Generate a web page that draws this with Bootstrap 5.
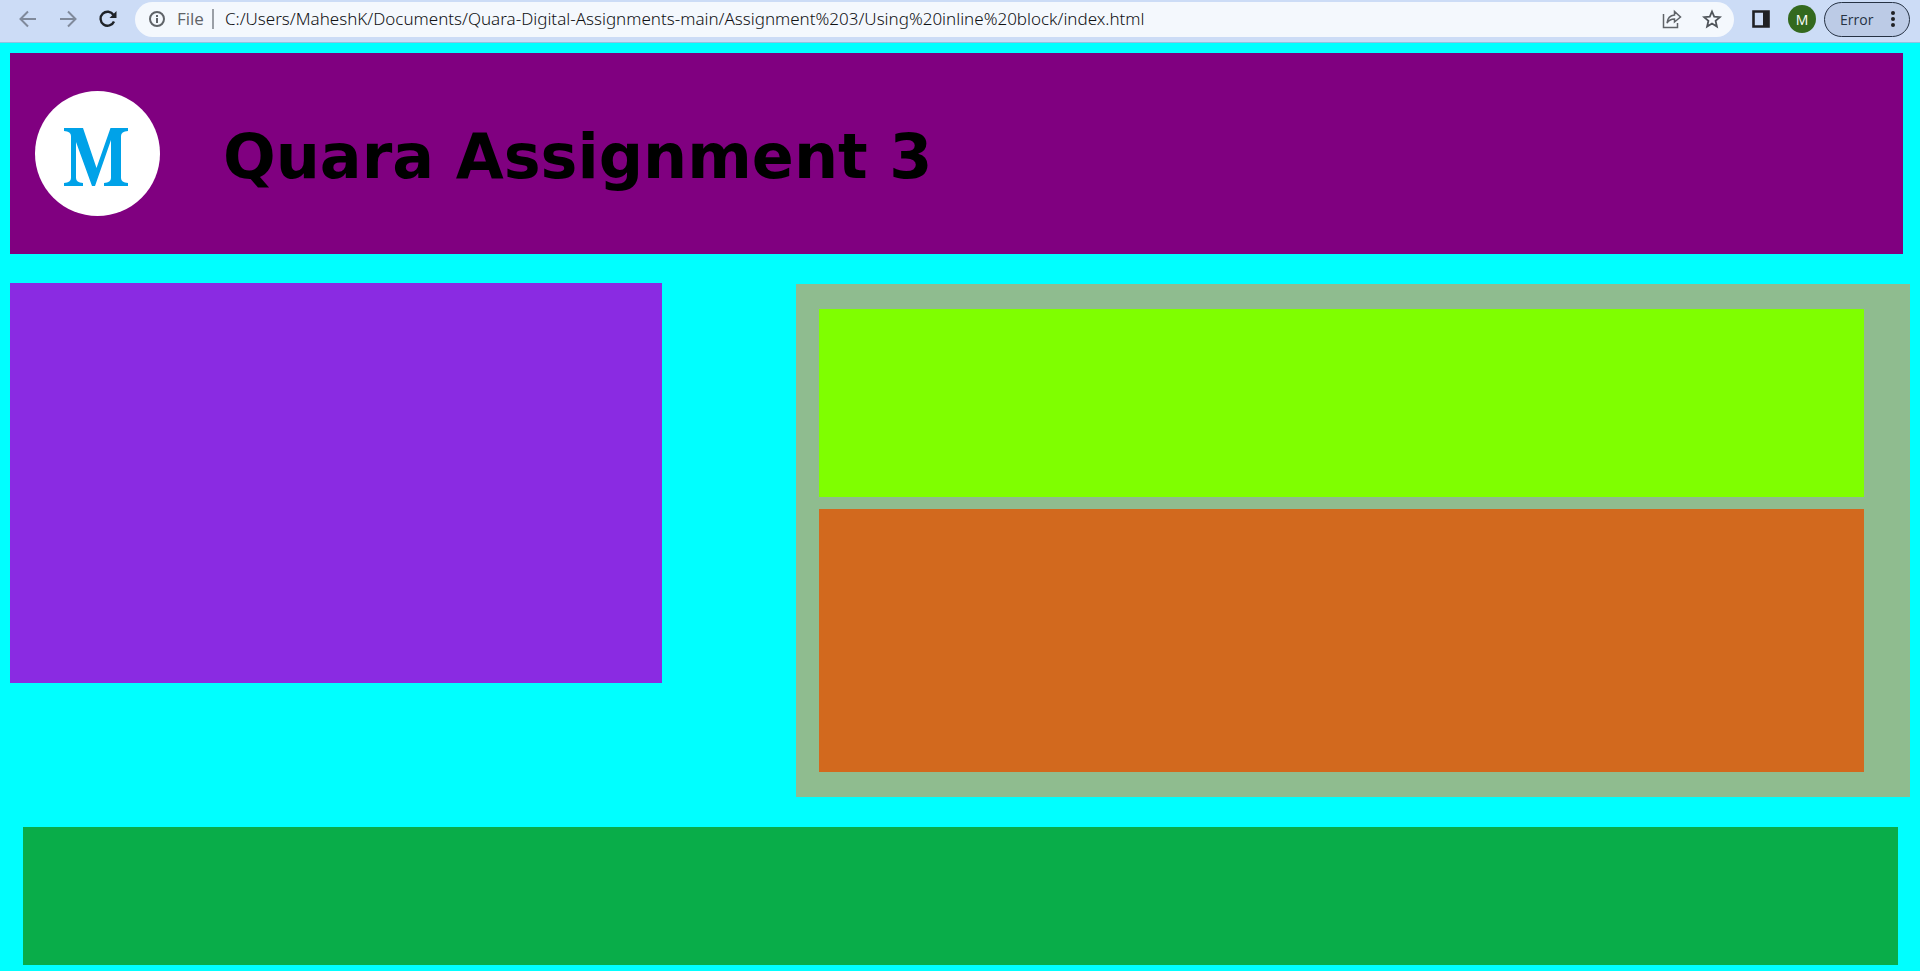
<!DOCTYPE html>
<html lang="en">
<head>
<meta charset="utf-8">
<meta name="viewport" content="width=device-width, initial-scale=1">
<title>Quara Assignment 3</title>
<link href="https://cdn.jsdelivr.net/npm/bootstrap@5.3.0/dist/css/bootstrap.min.css" rel="stylesheet">
<style>
  body { background: #00ffff; color: #000; }
  .toolbar { height: 43px; padding: 2px 10px 6px 16px; background: #ccdcf6; border-bottom: 1px solid #8fc3e2; font-family: "Open Sans", "Noto Sans", sans-serif; }
  .tool-btn { width: 24px; height: 24px; padding: 0; border: 0; background: none; color: #1f2328; flex: none; display: flex; align-items: center; justify-content: center; }
  .tool-btn:disabled { color: #808a9b; }
  .nav-tools { gap: 16px; }
  .tool-gap { margin-left: 15px; }
  .address { height: 35px; margin-left: 15px; padding: 0 10px 0 12px; border-radius: 18px; background: #f4f8fd; color: #5f6368; font-size: 17px; }
  .scheme { border-right: 2px solid #9a9fa6; line-height: 20px; padding-right: 8px; margin-left: 10px; margin-right: 11px; }
  .url { min-width: 0; border: 0; padding: 0; outline: 0; background: none; color: #101114; font-family: "Noto Sans", sans-serif; font-size: 17px; font-weight: 300; line-height: 24px; }
  .avatar { width: 28px; height: 28px; background: #33691e; color: #fff; font-size: 14px; }
  .error-btn { width: 86px; height: 35px; padding: 0 12px 0 15px; border: 1px solid #263244; border-radius: 18px; background: #bccbe6; color: #263244; font-size: 14px; }
  .page { padding: 10px; }
  .banner { height: 201px; margin-right: 7px; padding: 0 25px; background: #800080; }
  .logo { width: 125px; height: 125px; margin-bottom: 1px; flex: none; }
  .title { margin: 7px 0 0 63px; font: bold 62px/76px "DejaVu Sans", Verdana, sans-serif; }
  .columns { display: grid; grid-template-columns: 652fr 1114fr; column-gap: 134px; align-items: start; margin: 29px 0 30px; }
  .side { height: 400px; background: #8a2be2; }
  .main-box { margin-top: 1px; padding: 25px 46px 25px 23px; background: #8fbc8f; }
  .upper { height: 188px; margin-bottom: 12px; background: #7fff00; }
  .lower { height: 263px; background: #d2691e; }
  .bottom-bar { height: 138px; margin: 0 12px 0 13px; background: #09ad49; }
</style>
</head>
<body>
<nav class="toolbar d-flex align-items-center" aria-label="Browser">
  <div class="nav-tools d-flex">
    <button class="tool-btn" type="button" disabled aria-label="Back"><svg width="18" height="18" viewBox="0 0 18 18" fill="none" stroke="currentColor" stroke-width="2"><path d="M17 9H2M9 1.500L1.500 9L9 16.500"/></svg></button>
    <button class="tool-btn" type="button" disabled aria-label="Forward"><svg width="18" height="18" viewBox="0 0 18 18" fill="none" stroke="currentColor" stroke-width="2"><path d="M1 9H16M9 1.500L16.500 9L9 16.500"/></svg></button>
    <button class="tool-btn" type="button" aria-label="Reload"><svg width="20" height="18" viewBox="0 0 20 18"><path d="M15.500 5A7 7 0 1 0 16 11.500" fill="none" stroke="currentColor" stroke-width="2.400"/><path d="M18.500 1V8H11.500Z" fill="currentColor"/></svg></button>
  </div>
  <div class="address d-flex align-items-center flex-grow-1">
    <svg class="flex-shrink-0" width="20" height="20" viewBox="0 0 20 20" fill="none" stroke="#5f6368" stroke-width="2"><circle cx="10" cy="10" r="7"/><path d="M10 9V14M10 6V8"/></svg>
    <label class="scheme" for="url">File</label>
    <input class="url flex-grow-1" id="url" type="text" value="C:/Users/MaheshK/Documents/Quara-Digital-Assignments-main/Assignment%203/Using%20inline%20block/index.html">
    <button class="tool-btn" type="button" aria-label="Share"><svg width="20" height="20" viewBox="0 0 20 20" fill="none" stroke="#5f6368" stroke-width="1.500"><path d="M1.500 5V18.500H15.500V14M5 14C5.500 9 8 6.500 12.500 6V2.500L18.500 8L12.500 13V10C9 10 7 11 5 14Z"/></svg></button>
    <button class="tool-btn ms-3" type="button" aria-label="Bookmark"><svg width="20" height="20" viewBox="0 0 20 20" fill="none" stroke="#4f545a" stroke-width="1.800"><path d="M10 2.500L12.200 7.700L17.900 8.200L13.600 11.900L14.900 17.500L10 14.500L5.100 17.500L6.400 11.900L2.100 8.200L7.800 7.700Z"/></svg></button>
  </div>
  <button class="tool-btn tool-gap" type="button" aria-label="Side panel"><svg width="18" height="18" viewBox="0 0 18 18"><path d="M1.500 1.500H16.500V16.500H1.500Z" fill="none" stroke="#202124" stroke-width="2.600"/><path d="M11 1H17V17H11Z" fill="#202124"/></svg></button>
  <button class="avatar tool-gap btn rounded-circle border-0 p-0 me-2" type="button" aria-label="Profile">M</button>
  <button class="error-btn d-flex align-items-center justify-content-between" type="button">Error<svg width="8" height="18" viewBox="0 0 8 18" fill="#202124"><circle cx="4" cy="3" r="2"/><circle cx="4" cy="9" r="2"/><circle cx="4" cy="15" r="2"/></svg></button>
</nav>
<div class="page">
  <header class="banner d-flex align-items-center">
    <svg class="logo" viewBox="0 0 125 125" role="img" aria-label="Logo"><circle cx="62.500" cy="62.500" r="62.500" fill="#fff"/><path fill="#00a2e8" d="M29 37H48L61.500 77L75.500 37H93V40Q86 40.500 86 45V87Q86 91.500 93 92V95H69V92Q76 91.500 76 87V49L60 95H57L41 51V87Q41 91.500 48 92V95H29V92Q36 91.500 36 87V45Q36 40.500 29 40Z"/></svg>
    <h1 class="title">Quara Assignment 3</h1>
  </header>
  <main class="columns">
    <section class="side"></section>
    <section class="main-box">
      <div class="upper"></div>
      <div class="lower"></div>
    </section>
  </main>
  <footer class="bottom-bar"></footer>
</div>
<script src="https://cdn.jsdelivr.net/npm/bootstrap@5.3.0/dist/js/bootstrap.bundle.min.js"></script>
</body>
</html>
